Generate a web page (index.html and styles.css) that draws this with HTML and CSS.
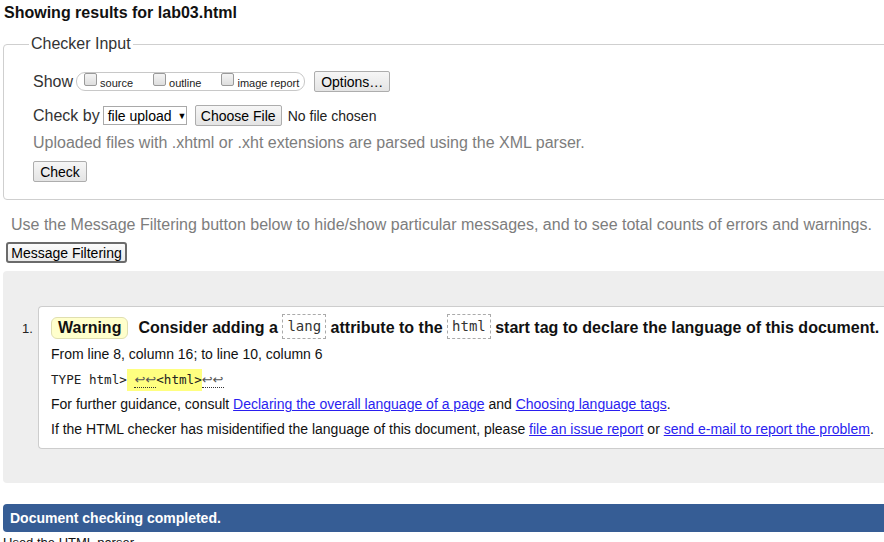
FILE: index.html
```html
<!DOCTYPE html>
<html lang="en">
<head>
<meta charset="utf-8">
<title>Showing results for lab03.html</title>
<link rel="stylesheet" href="styles.css">
</head>
<body>
<div class="page">
  <h2 class="title">Showing results for lab03.html</h2>
  <fieldset class="checker">
    <legend>Checker Input</legend>
    <div class="rows">
      <div class="row row-show">
        <span class="lbl">Show</span>
        <span class="cbgroup">
          <span class="cb"><span class="box"></span><span class="cbl">source</span></span>
          <span class="cb"><span class="box"></span><span class="cbl">outline</span></span>
          <span class="cb"><span class="box"></span><span class="cbl">image report</span></span>
        </span>
        <button class="btn btn-options" type="button">Options…</button>
      </div>
      <div class="row row-by">
        <span class="lbl">Check by</span>
        <span class="select">file upload <span class="arrow">▼</span></span>
        <button class="btn btn-file" type="button">Choose File</button>
        <span class="nofile">No file chosen</span>
      </div>
      <div class="row row-note">Uploaded files with .xhtml or .xht extensions are parsed using the XML parser.</div>
      <div class="row row-check"><button class="btn btn-check" type="button">Check</button></div>
    </div>
  </fieldset>
  <p class="filter-note">Use the Message Filtering button below to hide/show particular messages, and to see total counts of errors and warnings.</p>
  <button class="btn-filter" type="button">Message Filtering</button>
  <div class="results">
    <div class="num">1.</div>
    <div class="msg">
      <div class="msg-title">
        <span class="badge">Warning</span>
        <span class="msg-text">Consider adding a <code class="c">lang</code> attribute to the <code class="c">html</code> start tag to declare the language of this document.</span>
      </div>
      <div class="line">From line 8, column 16; to line 10, column 6</div>
      <div class="line mono">TYPE html&gt;<span class="hl"> <span class="lf">↩↩</span>&lt;html&gt;</span><span class="lf">↩↩</span></div>
      <div class="line">For further guidance, consult <a href="#">Declaring the overall language of a page</a> and <a href="#">Choosing language tags</a>.</div>
      <div class="line">If the HTML checker has misidentified the language of this document, please <a href="#">file an issue report</a> or <a href="#">send e-mail to report the problem</a>.</div>
    </div>
  </div>
  <div class="done">Document checking completed.</div>
  <p class="parser">Used the HTML parser.</p>
</div>
</body>
</html>
```
FILE: styles.css
```css
html { overflow: hidden; background: #fff; }
body {
  margin: 0;
  font-family: "Liberation Sans", Arial, sans-serif;
  color: #000;
}
.page {
  width: 1000px;
  padding: 0 0 0 3px;
}
.title {
  font-size: 16px;
  font-weight: bold;
  line-height: 18px;
  margin: 4px 0 13px 1px;
  color: #111;
}
.checker {
  margin: 0;
  padding: 0 0 17px 25px;
  border: 1px solid #cfcfcf;
  border-radius: 4px;
}
.checker legend {
  font-size: 16px;
  color: #333;
  padding: 0 2px;
}
.rows {
  display: flex;
  flex-direction: column;
  padding: 18px 0 0 4px;
}
.row {
  display: flex;
  align-items: center;
  font-size: 16px;
  color: #333;
}
.row-show { height: 21px; }
.row-by { height: 21px; margin-top: 13px; }
.row-note { height: 18px; margin-top: 8px; color: #7d7d7d; }
.row-check { height: 21px; margin-top: 9px; }
.lbl { margin-right: 3px; }
.cbgroup {
  display: flex;
  align-items: center;
  height: 17px;
  border: 1px solid #c8c8c8;
  border-radius: 9px;
  padding: 0 5px 0 7px;
  margin-right: 9px;
}
.cb {
  display: flex;
  align-items: center;
  margin-right: 20px;
}
.cb:last-child { margin-right: 0; }
.box {
  width: 11px;
  height: 11px;
  border: 1px solid #9a9a9a;
  border-radius: 2px;
  background: linear-gradient(#f4f4f4, #dedede);
  margin-top: -4px;
  margin-right: 3px;
}
.cbl {
  font-size: 11px;
  color: #222;
  margin-top: 3px;
}
.btn {
  box-sizing: border-box;
  font-family: "Liberation Sans", Arial, sans-serif;
  font-size: 14px;
  color: #000;
  background: linear-gradient(#f6f6f6, #e4e4e4);
  border: 1px solid #adadad;
  border-radius: 2px;
  height: 21px;
  padding: 0;
  line-height: 18px;
  white-space: nowrap;
}
.btn-options { width: 76px; }
.btn-file { width: 87px; margin: 0 6px 0 8px; }
.btn-check { width: 54px; }
.select {
  display: inline-flex;
  align-items: center;
  height: 17px;
  width: 78px;
  padding: 0 0 0 4px;
  border: 1px solid #a9a9a9;
  background: #fff;
  font-size: 14px;
  color: #000;
  white-space: nowrap;
}
.select .arrow { font-size: 9px; margin-left: 6px; }
.nofile { font-size: 14px; color: #222; }
.filter-note {
  margin: 16px 0 0 8px;
  font-size: 16px;
  line-height: 18px;
  color: #7d7d7d;
}
.btn-filter {
  box-sizing: border-box;
  display: block;
  margin: 8px 0 0 3px;
  height: 21px;
  width: 121px;
  padding: 0;
  font-family: "Liberation Sans", Arial, sans-serif;
  font-size: 14px;
  color: #000;
  background: linear-gradient(#fbfbfb, #eaeaea);
  border: 2px solid #6b6b6b;
  border-radius: 3px;
}
.results {
  display: flex;
  align-items: flex-start;
  margin-top: 8px;
  background: #eeeeee;
  border-radius: 4px;
  padding: 35px 0 34px 19px;
}
.num {
  width: 16px;
  font-size: 13px;
  color: #222;
  margin-top: 15px;
}
.msg {
  flex: 1;
  background: #fff;
  border: 1px solid #cdcdcd;
  border-right: none;
  border-radius: 4px 0 0 4px;
  padding: 7px 0 6px 12px;
  font-size: 14px;
  color: #111;
}
.msg-title {
  display: flex;
  align-items: center;
  height: 28px;
  font-size: 16px;
  font-weight: bold;
  white-space: nowrap;
}
.badge {
  display: inline-block;
  background: #ffffcc;
  border: 1px solid #e0dfb0;
  border-radius: 6px;
  padding: 1px 6px;
  line-height: 18px;
  margin-right: 10px;
}
.c {
  display: inline-block;
  font-family: "DejaVu Sans Mono", "Liberation Mono", monospace;
  font-weight: normal;
  font-size: 14px;
  color: #333;
  border: 1px dashed #aaa;
  padding: 3px 4px;
  line-height: 17px;
  vertical-align: middle;
  margin: -4px 0 0;
}
.line {
  line-height: 25px;
  white-space: nowrap;
}
.mono {
  font-family: "DejaVu Sans Mono", "Liberation Mono", monospace;
  font-size: 12.6px;
  color: #222;
}
.hl {
  background: #ffff80;
  padding: 3px 0 4px;
}
.lf {
  font-family: "DejaVu Sans", sans-serif;
  border-bottom: 1px dotted #333;
  font-size: 13px;
  color: #555;
}
a { color: #2a1ef0; text-decoration: underline; }
.done {
  margin-top: 21px;
  height: 28px;
  line-height: 28px;
  background: #365d95;
  color: #fff;
  font-weight: bold;
  font-size: 14px;
  padding-left: 7px;
  border-radius: 4px 0 0 4px;
}
.parser {
  margin: 3px 0 0;
  font-size: 13px;
  color: #111;
}
```
